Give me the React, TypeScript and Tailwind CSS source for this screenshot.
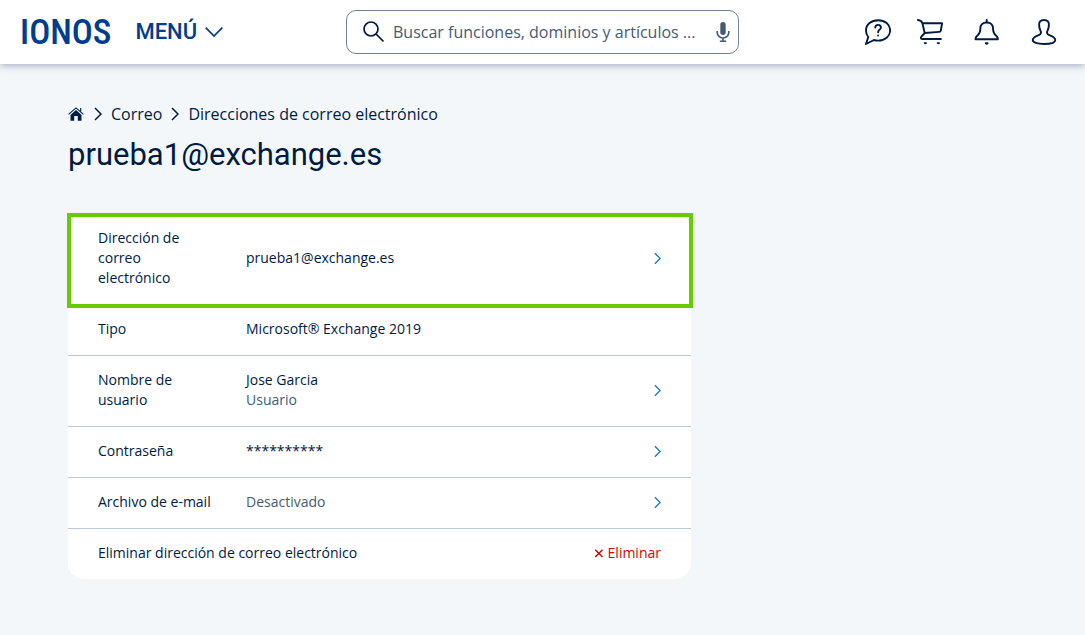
import type { ReactNode } from "react";

type Row = {
  label: string;
  value: string;
  hint?: string;
  muted?: boolean;
  editable?: boolean;
  highlighted?: boolean;
};

const rows: Row[] = [
  {
    label: "Dirección de correo electrónico",
    value: "prueba1@exchange.es",
    editable: true,
    highlighted: true,
  },
  { label: "Tipo", value: "Microsoft® Exchange 2019" },
  { label: "Nombre de usuario", value: "Jose Garcia", hint: "Usuario", editable: true },
  { label: "Contraseña", value: "**********", editable: true },
  { label: "Archivo de e-mail", value: "Desactivado", muted: true, editable: true },
];

// Header icons share one 26px grid
const HeaderIcon = ({ label, children }: { label: string; children: ReactNode }) => (
  <button type="button" aria-label={label} className="shrink-0 cursor-pointer">
    <svg
      viewBox="0 0 26 26"
      className="block h-[26px] w-[26px]"
      fill="none"
      stroke="currentColor"
      strokeWidth="1.9"
      strokeLinecap="round"
      strokeLinejoin="round"
    >
      {children}
    </svg>
  </button>
);

const Chevron = ({ className }: { className: string }) => (
  <svg viewBox="0 0 8 14" className={className} fill="none" stroke="currentColor" aria-hidden="true">
    <path d="M1 1l6 6-6 6" />
  </svg>
);

const Header = () => (
  <header className="relative grid h-16 grid-cols-[1fr_minmax(0,393px)_1fr] items-center bg-white px-5 shadow-[0_1px_8px_rgba(20,40,90,0.4)]">
    <div className="flex items-center gap-6">
      <a
        href="#"
        className="font-['Liberation_Sans_Narrow','Roboto_Condensed','Liberation_Sans',sans-serif] text-[35px] leading-none font-medium text-[#003d8f]"
      >
        IONOS
      </a>
      <button
        type="button"
        className="flex cursor-pointer items-center gap-2 font-[Roboto,sans-serif] text-[22px] leading-7 font-medium text-[#003d8f]"
      >
        MENÚ
        <svg viewBox="0 0 18 10" className="h-[10px] w-[18px]" fill="none" stroke="currentColor" strokeWidth="1.7">
          <path d="M.7.7L9 9l8.300-8.300" />
        </svg>
      </button>
    </div>

    <form role="search" className="flex h-11 items-center gap-2 rounded-[10px] border border-[#718095] pr-2 pl-4">
      <svg
        viewBox="0 0 22 22"
        className="h-[22px] w-[22px] shrink-0"
        fill="none"
        stroke="currentColor"
        strokeWidth="1.7"
        aria-hidden="true"
      >
        <circle cx="8" cy="8" r="7" />
        <path d="M13 13l7.500 7.500" />
      </svg>
      <input
        type="text"
        aria-label="Buscar"
        placeholder="Buscar funciones, dominios y artículos ..."
        className="min-w-0 flex-1 bg-transparent text-base text-[#465a75] outline-none placeholder:text-[#465a75]"
      />
      <button type="button" aria-label="Búsqueda por voz" className="shrink-0 cursor-pointer text-[#465a75]">
        <svg viewBox="0 0 14 20" className="block h-5 w-[14px]">
          <rect x="4.300" y="0" width="5.400" height="13" rx="2.700" fill="currentColor" />
          <path
            d="M1.200 9v1.500a5.800 5.500 0 0 0 11.600 0V9M7 16v3M3.800 19.200h6.400"
            fill="none"
            stroke="currentColor"
            strokeWidth="1.600"
          />
        </svg>
      </button>
    </form>

    <div className="flex items-center justify-end gap-[31px] pr-2">
      <div className="flex items-center gap-[26px]">
        <HeaderIcon label="Ayuda">
          <path d="M1 25l2.300-7C1.700 16.100 1 13.800 1 11.400 1 5.500 6.300 1.200 13.100 1.200S25.100 5.500 25.100 11.400 19.900 21.600 13.100 21.600c-1.500 0-2.900-.2-4.200-.6z" />
          <path d="M10.300 8.600c0-1.800 1.200-2.700 2.800-2.700s2.800 1 2.800 2.600c0 2.200-2.800 2.100-2.800 4.800M13.100 16.400v.1" />
        </HeaderIcon>
        <HeaderIcon label="Carrito">
          <path d="M.9 1C3.400 1.200 4.800 2.200 5.400 4.300h19.700l-1.300 7.200q-.2 1.300-1.500 1.400L7.700 14 5.400 4.300M7.700 14l-3.300 3.700c-.9 1.100-.5 2.300.6 2.300h18.900" />
          <path d="M7.500 23.900h1.700a.9.900 0 0 1-1.700 0zM20.500 23.900h1.700a.9.900 0 0 1-1.700 0z" strokeWidth="1.500" />
        </HeaderIcon>
      </div>
      <HeaderIcon label="Notificaciones">
        <path d="M12.700.9v2.400M12.700 3.500C8.500 3.500 6.400 6.100 6.400 9.200c0 5-1.700 6.300-3.600 8-1 .8-1.300 1.800-1.300 3.100h22.400c0-1.300-.3-2.300-1.300-3.100-1.900-1.700-3.600-3-3.600-8 0-3.100-2.100-5.700-6.300-5.700z" />
        <path d="M11.600 23.900h2.200a1.100 1 0 0 1-2.200 0z" strokeWidth="1.500" />
      </HeaderIcon>
      <HeaderIcon label="Mi cuenta">
        <path d="M13 1C9.600 1 8 2.900 8.100 5.600c0 2.600.3 4 1.100 5.400 1.300 2.500.9 4.200-1.500 5.100-3.600 1.300-6 2.700-6 4.900C1.700 23.500 6.300 25 13 25s11.300-1.500 11.300-4c0-2.200-2.400-3.600-6-4.900-2.400-.9-2.800-2.600-1.500-5.100.8-1.400 1.100-2.800 1.100-5.400C18 2.900 16.400 1 13 1z" />
      </HeaderIcon>
    </div>
  </header>
);

const Breadcrumb = () => (
  <nav aria-label="Ruta" className="flex items-center gap-[9px] text-base leading-6">
    <a href="#" aria-label="Inicio" className="mr-px">
      <svg viewBox="0 0 16 14" className="block h-[14px] w-4" fill="currentColor">
        <path d="M8 3.100l5.500 4.900v5.200q0 .5-.5.500H9.800V9H6.200v4.700H3q-.5 0-.5-.500V8z" />
        <path d="M.6 7.300L8 .9l7.400 6.400M12.700 1v3.200" fill="none" stroke="currentColor" strokeWidth="1.100" />
      </svg>
    </a>
    <Chevron className="h-[14px] w-2 stroke-[1.500px]" />
    <a href="#">Correo</a>
    <Chevron className="h-[14px] w-2 stroke-[1.500px]" />
    <a href="#">Direcciones de correo electrónico</a>
  </nav>
);

const DetailRow = ({ row }: { row: Row }) => (
  <div className="relative flex items-center border-b border-[#bcc8d4] px-[30px] pt-[14px] pb-4">
    <dt className="w-[148px] shrink-0 pr-8">{row.label}</dt>
    <dd className={row.muted ? "flex-1 text-[#465a75]" : "flex-1"}>
      {row.value}
      {row.hint && <span className="block text-[#465a75]">{row.hint}</span>}
    </dd>
    {row.editable && (
      <dd>
        <a href="#" aria-label={`Editar ${row.label}`} className="block text-[#1474c4]">
          <Chevron className="h-[13px] w-[7px] stroke-[1.500px]" />
        </a>
      </dd>
    )}
    {row.highlighted && (
      <div className="pointer-events-none absolute -top-px -right-0.5 -bottom-1 -left-px z-10 border-4 border-[#66cc00]" />
    )}
  </div>
);

export default function App() {
  return (
    <div className="min-h-screen bg-[#f3f7fa] font-['Open_Sans',sans-serif] text-[#001b41]">
      <Header />
      <main className="px-[68px] pt-[38px] pb-14">
        <Breadcrumb />
        <h1 className="mt-[9px] font-[Roboto,sans-serif] text-[31px] leading-10">prueba1@exchange.es</h1>

        <section className="mt-[39px] max-w-[623px] rounded-2xl bg-white text-sm leading-5">
          <dl>
            {rows.map((row) => (
              <DetailRow key={row.label} row={row} />
            ))}
          </dl>
          <div className="flex items-center justify-between px-[30px] pt-[14px] pb-4">
            <span>Eliminar dirección de correo electrónico</span>
            <button type="button" className="flex cursor-pointer items-center gap-1 text-[#c90a00]">
              <svg viewBox="0 0 10 10" className="h-[10px] w-[10px]" stroke="currentColor" strokeWidth="1.500">
                <path d="M1.200 1.700l7.300 7.300M8.500 1.700L1.200 9" />
              </svg>
              Eliminar
            </button>
          </div>
        </section>
      </main>
    </div>
  );
}
